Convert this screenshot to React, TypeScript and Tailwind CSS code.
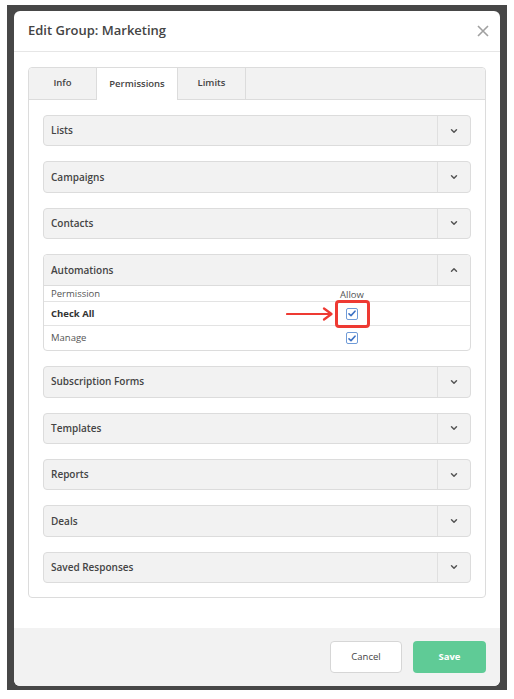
import { ChevronDown, ChevronUp } from "lucide-react";

const font = { fontFamily: '"Open Sans", "Liberation Sans", sans-serif' };

function Checkbox() {
  return (
    <span className="flex h-[12px] w-[12px] items-center justify-center rounded-[2px] border border-[#6f9bd8] bg-white">
      <svg width="8" height="7" viewBox="0 0 8 7">
        <path d="M1 3.8 L3 5.6 L7 1.2" fill="none" stroke="#3d72c4" strokeWidth="1.6" strokeLinecap="round" strokeLinejoin="round" />
      </svg>
    </span>
  );
}

function Section({ label }: { label: string }) {
  return (
    <div className="flex h-[31.4px] items-stretch rounded-[4px] border border-[#dcdcdc] bg-[#f2f2f2]">
      <div className="flex flex-1 items-center pl-[7px] text-[10px] font-semibold text-[#444]">{label}</div>
      <div className="flex w-[33px] items-center justify-center border-l border-[#e0e0e0] text-[#555]">
        <ChevronDown size={10} strokeWidth={3.5} />
      </div>
    </div>
  );
}

const before = ["Lists", "Campaigns", "Contacts"];
const after = ["Subscription Forms", "Templates", "Reports", "Deals", "Saved Responses"];

export default function App() {
  return (
    <div className="h-[699px] w-[514px] bg-white pb-[9px] pl-[7px] pr-[7px] pt-[5px]" style={font}>
      <div className="h-[685px] bg-[#474747] pb-[4px] pl-[7px] pr-[7px] pt-[6px]">
        <div className="flex h-[675px] flex-col overflow-hidden rounded-[6px] bg-white">
          <div className="flex h-[41px] shrink-0 items-center justify-between border-b border-[#e6e6e6] pl-[14px] pr-[11px]">
            <span className="text-[13px] font-semibold text-[#444]">Edit Group: Marketing</span>
            <svg width="12" height="12" viewBox="0 0 12 12">
              <path d="M1 1 L11 11 M11 1 L1 11" stroke="#a0a0a0" strokeWidth="1.6" />
            </svg>
          </div>

          <div className="flex-1 px-[14px] pt-[15px]">
            <div className="rounded-[4px] border border-[#dcdcdc]">
              <div className="flex h-[32px] rounded-t-[4px] border-b border-[#dcdcdc] bg-[#f2f2f2] text-[9.5px] font-semibold text-[#444]">
                <div className="flex w-[68px] items-center justify-center border-r border-[#dcdcdc]">Info</div>
                <div className="-mb-px flex w-[81px] items-center justify-center border-r border-[#dcdcdc] bg-white">Permissions</div>
                <div className="flex w-[68px] items-center justify-center border-r border-[#dcdcdc]">Limits</div>
              </div>

              <div className="flex flex-col gap-[15px] px-[14px] pb-[14px] pt-[15px]">
                {before.map((l) => (
                  <Section key={l} label={l} />
                ))}

                <div className="relative rounded-[4px] border border-[#dcdcdc]">
                  <div className="flex h-[31px] items-stretch rounded-t-[4px] border-b border-[#dcdcdc] bg-[#f2f2f2]">
                    <div className="flex flex-1 items-center pl-[7px] text-[10px] font-semibold text-[#444]">Automations</div>
                    <div className="flex w-[33px] items-center justify-center border-l border-[#e0e0e0] text-[#555]">
                      <ChevronUp size={10} strokeWidth={3.5} />
                    </div>
                  </div>
                  <div className="flex h-[16px] items-center border-b border-[#e3e3e3] text-[9.5px] leading-none text-[#555]">
                    <span className="flex-1 pl-[7px]">Permission</span>
                    <span className="mr-[98px] w-[40px] pt-[2px] text-center">Allow</span>
                  </div>
                  <div className="flex h-[24px] items-center border-b border-[#e3e3e3] text-[9.5px] text-[#333]">
                    <span className="flex-1 pl-[7px] font-bold">Check All</span>
                    <span className="mr-[98px] flex w-[40px] justify-center"><Checkbox /></span>
                  </div>
                  <div className="flex h-[24px] items-center text-[9.5px] text-[#555]">
                    <span className="flex-1 pl-[7px]">Manage</span>
                    <span className="mr-[98px] flex w-[40px] justify-center"><Checkbox /></span>
                  </div>

                  <svg className="absolute left-[242px] top-[52px]" width="48" height="14" viewBox="0 0 48 14">
                    <path d="M1 7 H45 M38 1.5 L45.5 7 L38 12.5" fill="none" stroke="#ee3a33" strokeWidth="2.2" strokeLinecap="round" strokeLinejoin="round" />
                  </svg>
                  <div className="absolute left-[291px] top-[45px] h-[28px] w-[35px] rounded-[4px] border-[3px] border-[#ee3a33]" />
                </div>

                {after.map((l) => (
                  <Section key={l} label={l} />
                ))}
              </div>
            </div>
          </div>

          <div className="flex h-[58px] shrink-0 items-center justify-end gap-[11px] bg-[#f2f2f2] pr-[14px]">
            <button className="h-[32px] w-[72px] rounded-[4px] border border-[#d6d6d6] bg-white text-[9.5px] text-[#444]">Cancel</button>
            <button className="h-[32px] w-[73px] rounded-[4px] bg-[#5fcb96] text-[9.5px] font-bold text-white">Save</button>
          </div>
        </div>
      </div>
    </div>
  );
}
